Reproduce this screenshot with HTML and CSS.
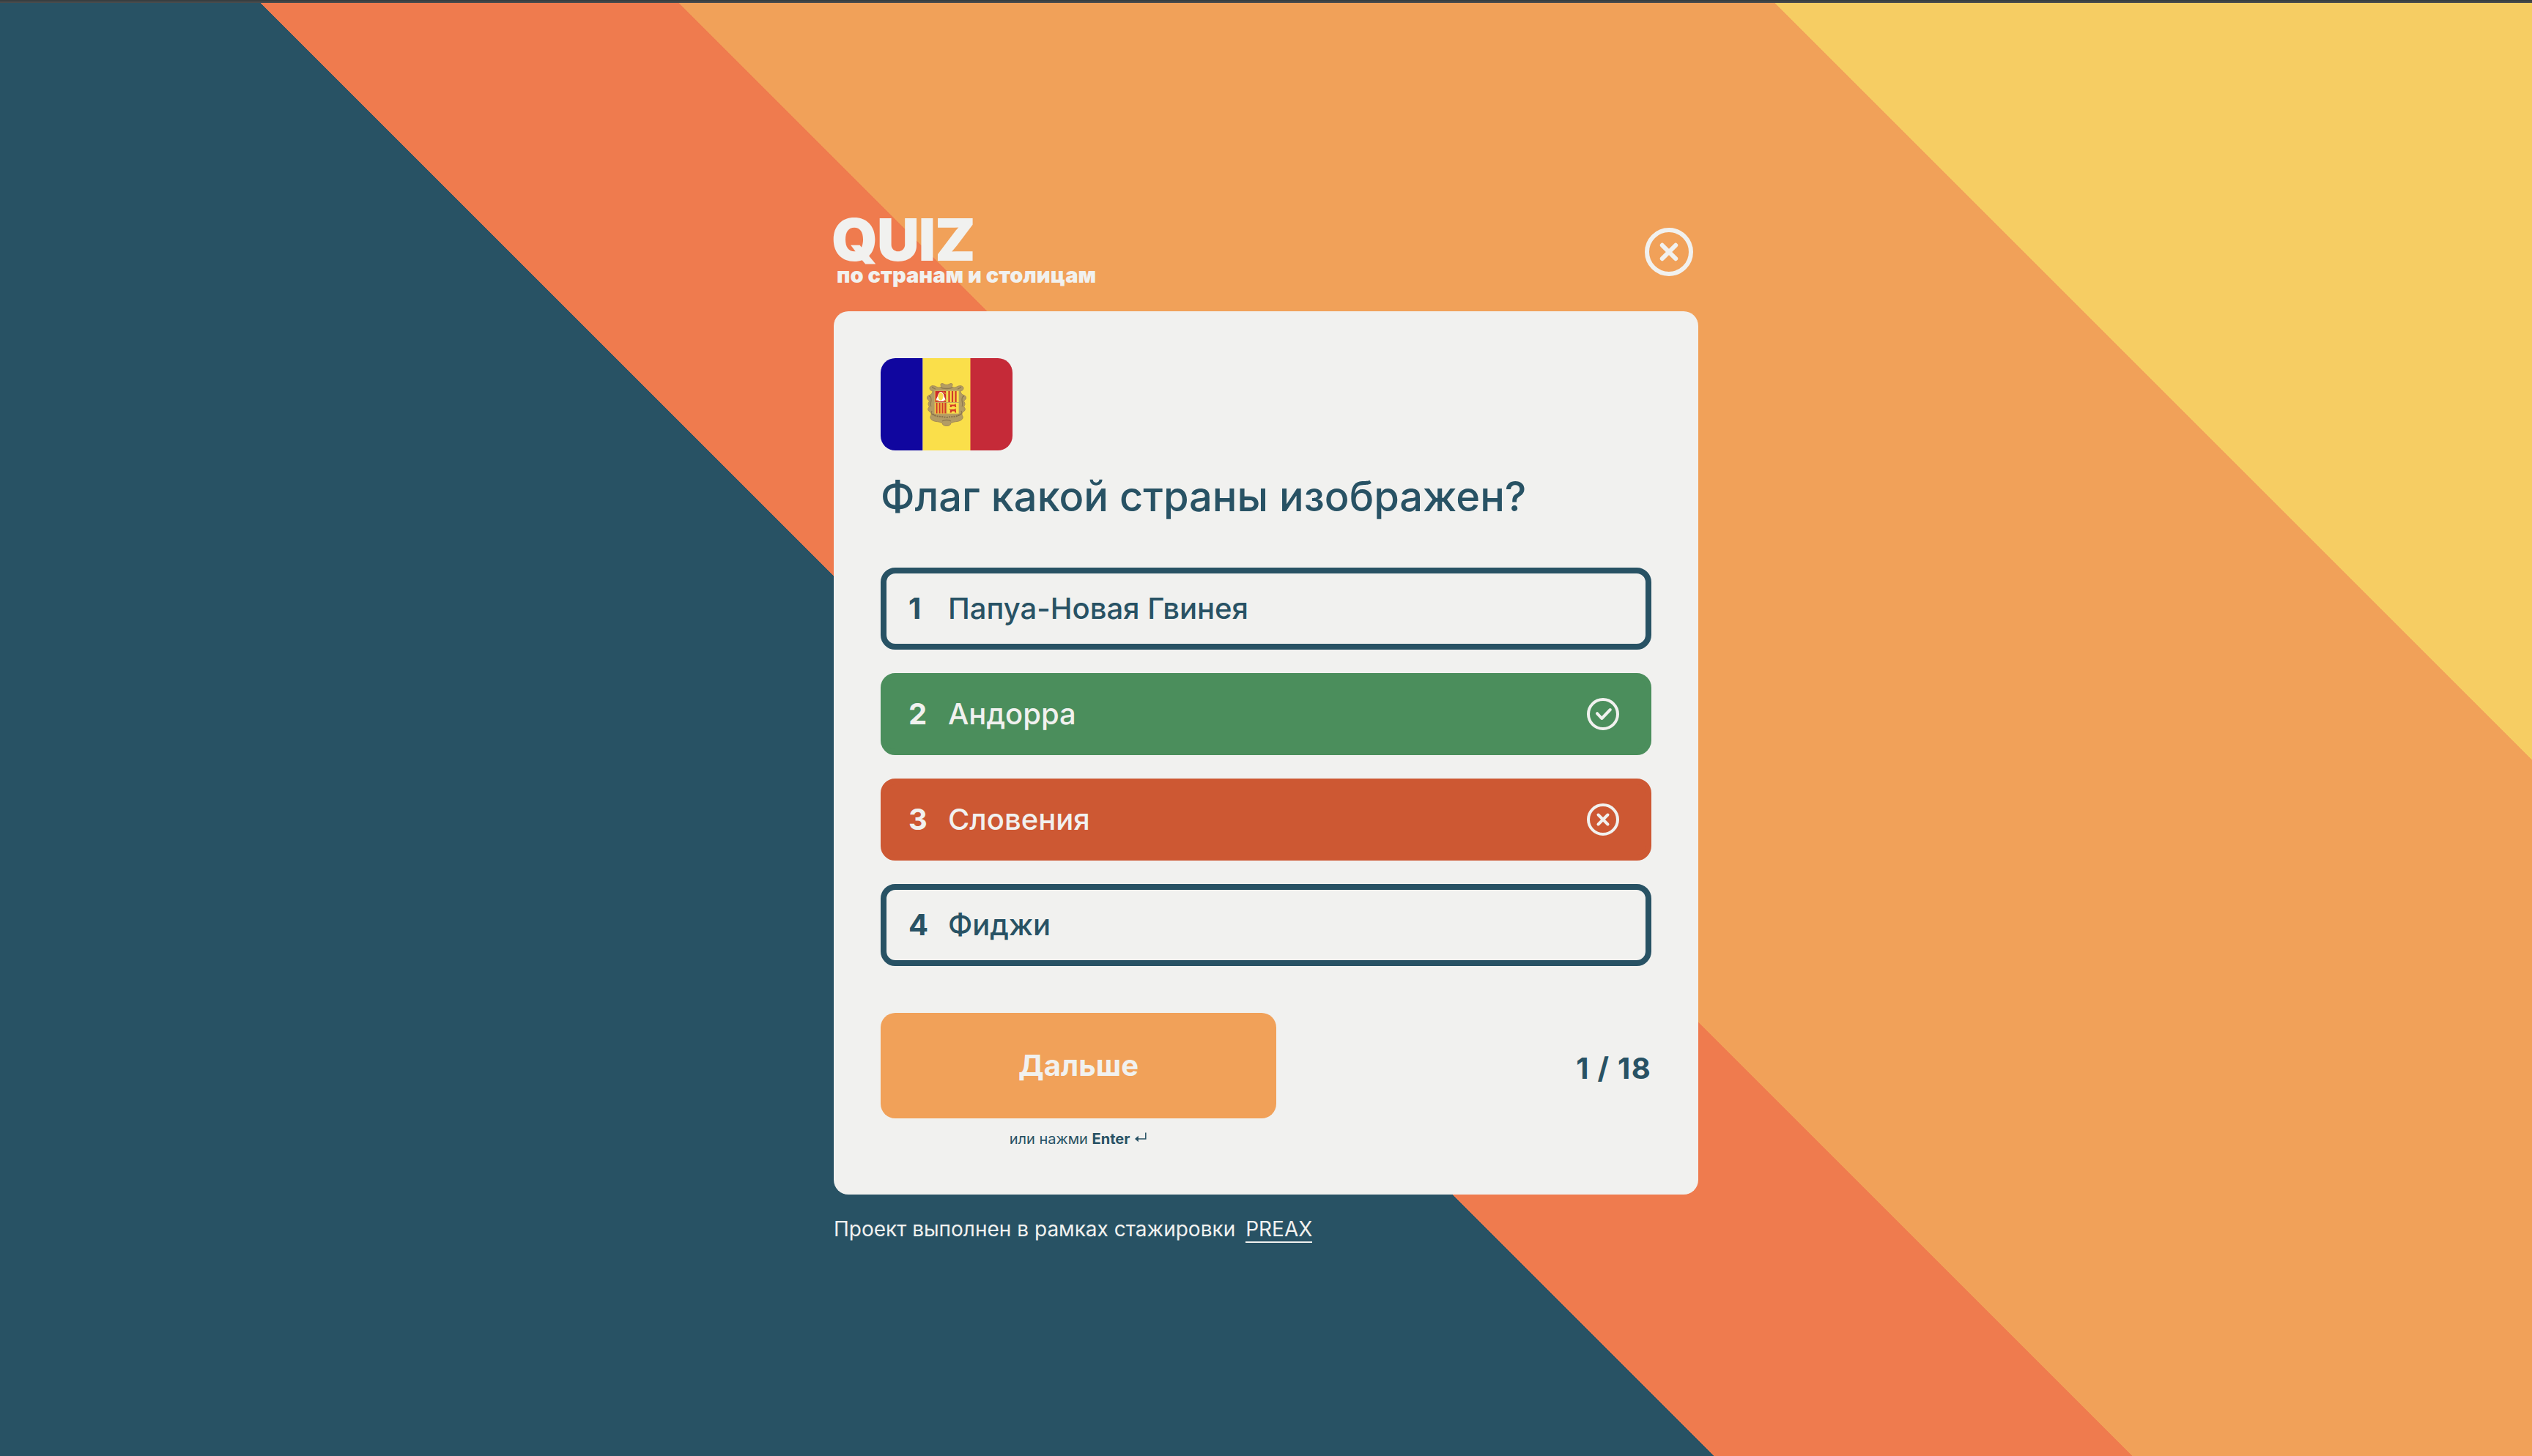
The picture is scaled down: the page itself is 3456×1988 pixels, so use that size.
FILE: index.html
```html
<!DOCTYPE html>
<html lang="ru">
<head>
<meta charset="utf-8">
<title>Quiz по странам и столицам</title>
<link rel="stylesheet" href="styles.css">
</head>
<body>
<div class="topbar"></div>
<main class="page">
  <header class="header">
    <div class="logo">
      <span class="logo-title">QUIZ</span>
      <span class="logo-subtitle">по странам и столицам</span>
    </div>
    <button class="close" type="button" aria-label="Закрыть">
      <svg class="close-icon" viewBox="0 0 66 66" fill="none" stroke="currentColor" stroke-width="6" stroke-linecap="round"><circle cx="33" cy="33" r="30"/><path d="M23.8 23.8 42.2 42.2M42.2 23.8 23.8 42.2"/></svg>
    </button>
  </header>

  <section class="card">
    <svg class="flag" viewBox="0 0 180 126">
      <path fill="#10069f" d="M0 0h57.5v126H0z"/>
      <path fill="#fadf4a" d="M57.5 0H123v126H57.5z"/>
      <path fill="#c52a38" d="M122.5 0H180v126h-57.5z"/>
      <path fill="#b39c64" stroke="#a58b55" stroke-width="1" stroke-linejoin="round" d="M90 36.500c-3 0-4-2-6.500-2-2 0-2 3-.5 4-3 3-6 1-8 0-3-1.500-8-1-8 2.500 0 3 3 4 4 3 0 3-1 5-3 6-3 1-5 2-4.500 5 .5 2 2.500 2 3 4-2 3-2 4.500 0 7-1 2-2.500 2.500-1.500 5 .8 2 3 2 4 4 1 3-2 4-1 7 1 2.500 4 4 8 4.500 5 .5 6 1.500 8.500 2.500-.5 2.500 3 3.500 5.500 3.500s6-1 5.500-3.500c2.500-1 3.500-2 8.500-2.500 4-.5 7-2 8-4.500 1-3-2-4-1-7 1-2 3.200-2 4-4 1-2.500-.5-3-1.500-5 2-2.500 2-4 0-7 .5-2 2.500-2 3-4 .5-3-1.500-4-4.500-5-2-1-3-3-3-6 1 1 4 0 4-3 0-3.500-5-4-8-2.500-2 1-5 3-8 0 1.500-1 1.500-4-.5-4-2.500 0-3.500 2-6.500 2z"/>
      <path fill="none" stroke="#8f7950" stroke-width="1.300" d="M70 40c2 0 3 2 5 2M110 40c-2 0-3 2-5 2M66 52c2 0 3 2 3 5s-2 6 0 9M114 52c-2 0-3 2-3 5s2 6 0 9M70 72c-2 4 1 6 5 6M110 72c2 4-1 6-5 6M82 40c3 2 13 2 16 0M84 86c3-2 9-2 12 0"/>
      <path fill="none" stroke="#87704a" stroke-width="1.800" stroke-dasharray="2 1.300" d="M71 76c4 5 11 3 19 5 8-2 15 0 19-5"/>
      <path fill="#fadf4a" stroke="#c5aa5c" stroke-width=".8" d="M73.500 44.500h33.500v31.500h-33.500z"/>
      <path fill="#cc2c2a" d="M74.500 45h14.500v15h-14.500z"/>
      <path fill="#fff" d="M77 59c-3-3 1-5 1-8 1-3 2.500-5 4-5s4 2 4.500 5c0 3 3.500 5 1 8z"/>
      <path fill="#f7da4e" d="M82 46.500c2 1 3.500 3 3.500 5.500s-1 5-3.500 6c-2.500-1-3.500-3.500-3.500-6s1.500-4.500 3.500-5.500z"/>
      <path stroke="#e0912f" stroke-width="1.500" d="m85 46 4 3M76 58h3M86 58h3"/>
      <path stroke="#c5aa5c" stroke-width="1" d="M90.200 44.500v31.500M73.500 60.500h33.500"/>
      <path stroke="#cf3b2b" stroke-width="2.300" d="M93.500 45v15M98 45v15M102.500 45v15M76.500 61v14.500M80.500 61v14.500M84.500 61v14.500M88.300 61v14.500"/>
      <path fill="#d33a28" d="m93 62 2 1.500h5.500l2-1.500.7 5h-1.700l-.5-1.500h-3.500l-1 1.500h-2l.5-2.500zm0 6.500 2 1.500h5.500l2-1.500.7 6h-1.700l-.5-2h-3.500l-1 2h-2l.5-3z"/>
    </svg>
    <h1 class="question">Флаг какой страны изображен?</h1>
    <ol class="answers">
      <li class="answer"><span class="answer-num">1</span><span class="answer-text">Папуа-Новая Гвинея</span></li>
      <li class="answer answer-correct"><span class="answer-num">2</span><span class="answer-text">Андорра</span>
        <svg class="answer-icon" viewBox="0 0 44 44" fill="none" stroke="currentColor" stroke-width="4" stroke-linecap="round" stroke-linejoin="round"><circle cx="22" cy="22" r="20"/><path d="m14 21.200 6.300 6.800L31.800 16"/></svg></li>
      <li class="answer answer-wrong"><span class="answer-num">3</span><span class="answer-text">Словения</span>
        <svg class="answer-icon" viewBox="0 0 44 44" fill="none" stroke="currentColor" stroke-width="4" stroke-linecap="round"><circle cx="22" cy="22" r="20"/><path d="m15.500 15.500 13 13M28.500 15.500l-13 13"/></svg></li>
      <li class="answer"><span class="answer-num">4</span><span class="answer-text">Фиджи</span></li>
    </ol>
    <div class="actions">
      <div class="next">
        <button class="next-button" type="button">Дальше</button>
        <p class="hint"><span>или нажми <b>Enter</b></span>
          <svg class="enter-icon" viewBox="0 0 17 15" fill="none" stroke="currentColor" stroke-width="1.500"><path d="M14.800 .6v8.400H3"/><path fill="currentColor" stroke="none" d="M0 9 4.800 4.700v8.600z"/></svg></p>
      </div>
      <span class="counter">1 / 18</span>
    </div>
  </section>

  <footer class="footer"><span>Проект выполнен в рамках стажировки</span><a class="footer-link">PREAX</a></footer>
</main>
</body>
</html>
```
FILE: styles.css
```css
* { box-sizing: border-box; margin: 0; padding: 0; }

body {
  height: 1988px;
  display: flex;
  flex-direction: column;
  overflow: hidden;
  font-family: Inter, "Noto Sans", sans-serif;
  color: #285264;
  background: #285264;
}

.topbar {
  flex: none;
  height: 4px;
  background: linear-gradient(#373e40 50%, #484b4c 50%);
}

.page {
  flex: 1;
  display: flex;
  flex-direction: column;
  align-items: center;
  padding-top: 283px;
  background: linear-gradient(45deg, #285264 43%, #ef7b4e 43%, #ef7b4e 53.5%, #f1a159 53.5%, #f1a159 81%, #f6cd63 81%);
}

.header {
  width: 1180px;
  height: 138px;
  display: flex;
  justify-content: space-between;
  align-items: flex-start;
  color: #f1f1ef;
}

.logo { display: flex; flex-direction: column; font-weight: 900; white-space: nowrap; }
.logo-title { margin-left: -3px; font-size: 80px; line-height: 80px; letter-spacing: -1px; }
.logo-subtitle { margin: -9px 0 0 4px; font-size: 29px; line-height: 36px; letter-spacing: 0.05px; }

.close { padding: 24px 7px 0 0; border: 0; background: none; color: inherit; }
.close-icon { display: block; width: 66px; height: 66px; }

.card {
  width: 1180px;
  height: 1206px;
  padding: 64px;
  border-radius: 20px;
  background: #f1f1ef;
}

.flag { display: block; width: 180px; height: 126px; border-radius: 20px; }

.question { margin-top: 29px; font-size: 56px; font-weight: 500; line-height: 68px; white-space: nowrap; }

.answers { margin-top: 63px; display: flex; flex-direction: column; gap: 32px; list-style: none; }
.answer {
  height: 112px;
  display: flex;
  align-items: center;
  padding: 0 36px 0 30px;
  border: 8px solid #285264;
  border-radius: 20px;
  font-size: 40px;
  font-weight: 500;
  line-height: 48px;
}
.answer-num { width: 54px; font-weight: 700; }
.answer-text { flex: 1; }
.answer-icon { width: 44px; height: 44px; }
.answer-correct { background: #4b8e5c; border-color: #4b8e5c; color: #f1f1ef; }
.answer-wrong { background: #cd5833; border-color: #cd5833; color: #f1f1ef; }

.actions { margin-top: 64px; display: flex; justify-content: space-between; align-items: flex-start; }
.next { width: 540px; }
.next-button {
  display: block;
  width: 100%;
  height: 144px;
  border: 0;
  border-radius: 20px;
  background: #f1a159;
  color: #f1f1ef;
  font: 700 40px/48px Inter, "Noto Sans", sans-serif;
}
.hint { margin-top: 16px; display: flex; justify-content: center; gap: 7px; font-size: 20px; line-height: 24px; }
.hint b { font-weight: 700; }
.enter-icon { width: 17px; height: 15px; margin-top: 3px; }
.counter { margin-top: 52px; font-size: 40px; font-weight: 700; line-height: 48px; letter-spacing: 1.3px; }

.footer { width: 1180px; margin-top: 30px; display: flex; gap: 14px; font-size: 28px; line-height: 34px; color: #f1f1ef; white-space: nowrap; }
.footer-link { border-bottom: 2px solid #f1f1ef; }
```
